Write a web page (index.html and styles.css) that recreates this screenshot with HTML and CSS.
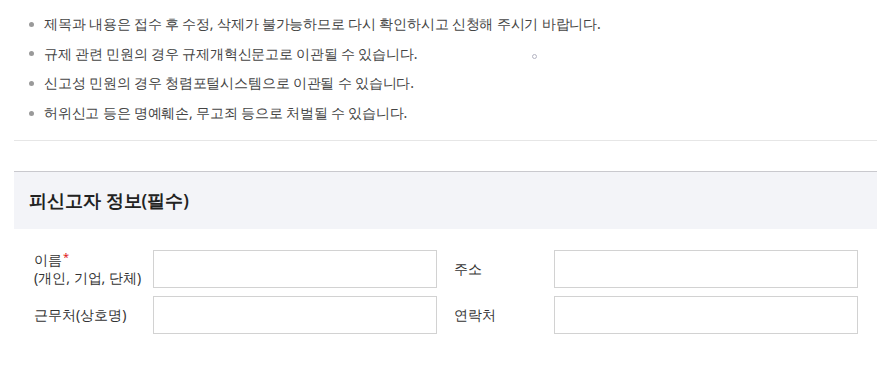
FILE: index.html
```html
<!DOCTYPE html>
<html lang="ko">
<head>
<meta charset="utf-8">
<link rel="stylesheet" href="styles.css">
</head>
<body>
<div class="page">
  <ul class="notice">
    <li>제목과 내용은 접수 후 수정, 삭제가 불가능하므로 다시 확인하시고 신청해 주시기 바랍니다.</li>
    <li>규제 관련 민원의 경우 규제개혁신문고로 이관될 수 있습니다.<span class="ring"></span></li>
    <li>신고성 민원의 경우 청렴포털시스템으로 이관될 수 있습니다.</li>
    <li>허위신고 등은 명예훼손, 무고죄 등으로 처벌될 수 있습니다.</li>
  </ul>
  <div class="section">
    <h2 class="section-title">피신고자 정보(필수)</h2>
    <div class="form-grid">
      <label class="label">이름<span class="req">*</span><br>(개인, 기업, 단체)</label>
      <input class="field" type="text">
      <label class="label label-r">주소</label>
      <input class="field" type="text">
      <label class="label">근무처(상호명)</label>
      <input class="field" type="text">
      <label class="label label-r">연락처</label>
      <input class="field" type="text">
    </div>
  </div>
</div>
</body>
</html>
```

FILE: styles.css
```css
html, body {
  margin: 0;
  padding: 0;
  background: #fff;
}
body {
  font-family: "Noto Sans", sans-serif;
  color: #333;
  width: 877px;
  overflow: hidden;
}
.page {
  padding-left: 14px;
}
.notice {
  list-style: none;
  margin: 0;
  padding: 9px 0 12px 0;
  border-bottom: 1px solid #e6e6e6;
}
.notice li {
  position: relative;
  padding-left: 30px;
  font-size: 14px;
  line-height: 29.7px;
  letter-spacing: -0.18px;
  color: #444;
  white-space: nowrap;
}
.notice li::before {
  content: "";
  position: absolute;
  left: 15px;
  top: 12.5px;
  width: 5px;
  height: 5px;
  border-radius: 50%;
  background: #9a9a9a;
}
.ring {
  position: absolute;
  left: 518px;
  top: 15px;
  width: 3px;
  height: 3px;
  border: 1px solid #b4b4c2;
  border-radius: 50%;
}
.section {
  margin-top: 30px;
}
.section-title {
  margin: 0;
  height: 57px;
  line-height: 57px;
  padding-left: 15px;
  border-top: 1px solid #c9c9ce;
  background: #f3f4f8;
  font-size: 17.5px;
  font-weight: 600;
  color: #222;
}
.form-grid {
  display: grid;
  grid-template-columns: 119px 284px 117px 304px;
  row-gap: 8px;
  padding: 21px 0 0 20px;
}
.label {
  display: block;
  align-self: center;
  font-size: 14px;
  line-height: 18px;
  color: #333;
}
.label-r {
  padding-left: 17px;
}
.req {
  color: #e02020;
  font-size: 11px;
  vertical-align: top;
  position: relative;
  top: -3px;
  margin-left: 1px;
}
.field {
  box-sizing: border-box;
  height: 38px;
  margin: 0;
  border: 1px solid #d2d2d2;
  background: #fff;
  font: inherit;
}
```
